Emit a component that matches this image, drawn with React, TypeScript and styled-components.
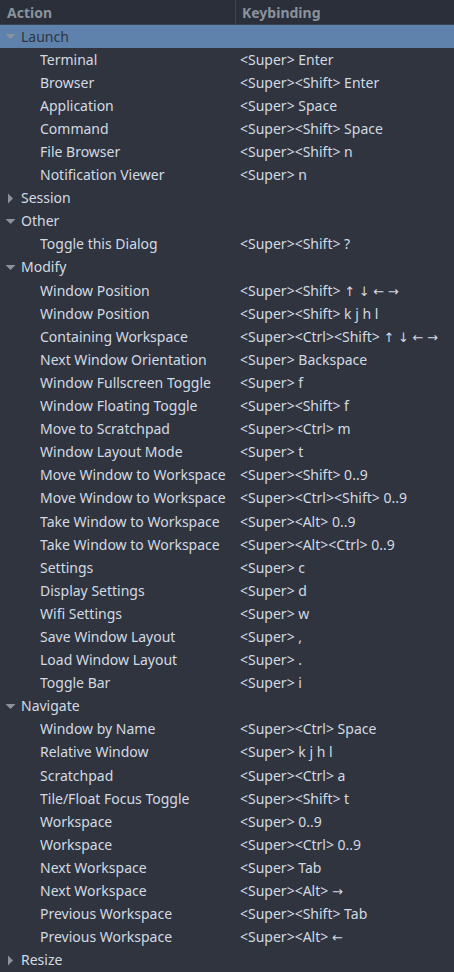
import React from "react";
import styled, { createGlobalStyle } from "styled-components";

const Global = createGlobalStyle`
  html, body { margin: 0; padding: 0; background: #2f343f; }
  body { font-family: "Noto Sans", "Open Sans", sans-serif; }
`;

type Child = [string, string];
type Group = { name: string; open: boolean; selected?: boolean; items: Child[] };

const data: Group[] = [
  {
    name: "Launch",
    open: true,
    selected: true,
    items: [
      ["Terminal", "<Super> Enter"],
      ["Browser", "<Super><Shift> Enter"],
      ["Application", "<Super> Space"],
      ["Command", "<Super><Shift> Space"],
      ["File Browser", "<Super><Shift> n"],
      ["Notification Viewer", "<Super> n"],
    ],
  },
  { name: "Session", open: false, items: [] },
  { name: "Other", open: true, items: [["Toggle this Dialog", "<Super><Shift> ?"]] },
  {
    name: "Modify",
    open: true,
    items: [
      ["Window Position", "<Super><Shift> ↑ ↓ ← →"],
      ["Window Position", "<Super><Shift> k j h l"],
      ["Containing Workspace", "<Super><Ctrl><Shift> ↑ ↓ ← →"],
      ["Next Window Orientation", "<Super> Backspace"],
      ["Window Fullscreen Toggle", "<Super> f"],
      ["Window Floating Toggle", "<Super><Shift> f"],
      ["Move to Scratchpad", "<Super><Ctrl> m"],
      ["Window Layout Mode", "<Super> t"],
      ["Move Window to Workspace", "<Super><Shift> 0..9"],
      ["Move Window to Workspace", "<Super><Ctrl><Shift> 0..9"],
      ["Take Window to Workspace", "<Super><Alt> 0..9"],
      ["Take Window to Workspace", "<Super><Alt><Ctrl> 0..9"],
      ["Settings", "<Super> c"],
      ["Display Settings", "<Super> d"],
      ["Wifi Settings", "<Super> w"],
      ["Save Window Layout", "<Super> ,"],
      ["Load Window Layout", "<Super> ."],
      ["Toggle Bar", "<Super> i"],
    ],
  },
  {
    name: "Navigate",
    open: true,
    items: [
      ["Window by Name", "<Super><Ctrl> Space"],
      ["Relative Window", "<Super> k j h l"],
      ["Scratchpad", "<Super><Ctrl> a"],
      ["Tile/Float Focus Toggle", "<Super><Shift> t"],
      ["Workspace", "<Super> 0..9"],
      ["Workspace", "<Super><Ctrl> 0..9"],
      ["Next Workspace", "<Super> Tab"],
      ["Next Workspace", "<Super><Alt> →"],
      ["Previous Workspace", "<Super><Shift> Tab"],
      ["Previous Workspace", "<Super><Alt> ←"],
    ],
  },
  { name: "Resize", open: false, items: [] },
];

const Tree = styled.div`
  width: 454px;
  height: 972px;
  overflow: hidden;
  background: #2f343f;
  color: #d3dae3;
  font-size: 14px;
`;

const Header = styled.div`
  display: grid;
  grid-template-columns: 236px 1fr;
  height: 24px;
  background: #2b2f39;
  border-bottom: 1px solid #3c4350;
`;

const HeaderCell = styled.div<{ $sep?: boolean }>`
  display: flex;
  align-items: center;
  padding-left: ${(p) => (p.$sep ? "7px" : "6px")};
  font-weight: 700;
  color: #8a929e;
  border-right: ${(p) => (p.$sep ? "1px solid #3c4350" : "none")};
`;

const Row = styled.div<{ $selected?: boolean }>`
  display: grid;
  grid-template-columns: 240px 1fr;
  height: 23.1px;
  box-sizing: border-box;
  padding-bottom: 1px;
  align-items: center;
  white-space: nowrap;
  background: ${(p) => (p.$selected ? "#5e82ac" : "transparent")};
  color: ${(p) => (p.$selected ? "#2f343f" : "#d3dae3")};
`;

const ActionCell = styled.div<{ $indent: number }>`
  display: flex;
  align-items: center;
  padding-left: ${(p) => p.$indent}px;
`;

const Expander = styled.span`
  width: 16px;
  display: inline-flex;
  align-items: center;
  justify-content: flex-start;
  margin-left: 5px;
  padding-top: 1px;
`;

const KeyCell = styled.div``;

const ArrowGlyph = styled.span`
  font-family: "DejaVu Sans", sans-serif;
  font-size: 13px;
`;

const Arrow = ({ open }: { open: boolean }) => (
  <svg width="11" height="11" viewBox="0 0 11 11">
    {open ? (
      <polygon points="0.5,3 10.5,3 5.5,8" fill="#8b929c" />
    ) : (
      <polygon points="3,0.5 8,5.5 3,10.5" fill="#8b929c" />
    )}
  </svg>
);

const renderKey = (k: string) =>
  k.split(/([↑↓←→])/).map((part, i) =>
    /[↑↓←→]/.test(part) ? <ArrowGlyph key={i}>{part}</ArrowGlyph> : <React.Fragment key={i}>{part}</React.Fragment>
  );

export default function App() {
  return (
    <>
      <Global />
      <Tree>
        <Header>
          <HeaderCell $sep>Action</HeaderCell>
          <HeaderCell>Keybinding</HeaderCell>
        </Header>
        {data.map((g, gi) => (
          <React.Fragment key={gi}>
            <Row $selected={g.selected}>
              <ActionCell $indent={0}>
                <Expander>
                  <Arrow open={g.open} />
                </Expander>
                {g.name}
              </ActionCell>
              <KeyCell />
            </Row>
            {g.open &&
              g.items.map(([a, k], i) => (
                <Row key={i}>
                  <ActionCell $indent={40}>{a}</ActionCell>
                  <KeyCell>{renderKey(k)}</KeyCell>
                </Row>
              ))}
          </React.Fragment>
        ))}
      </Tree>
    </>
  );
}
